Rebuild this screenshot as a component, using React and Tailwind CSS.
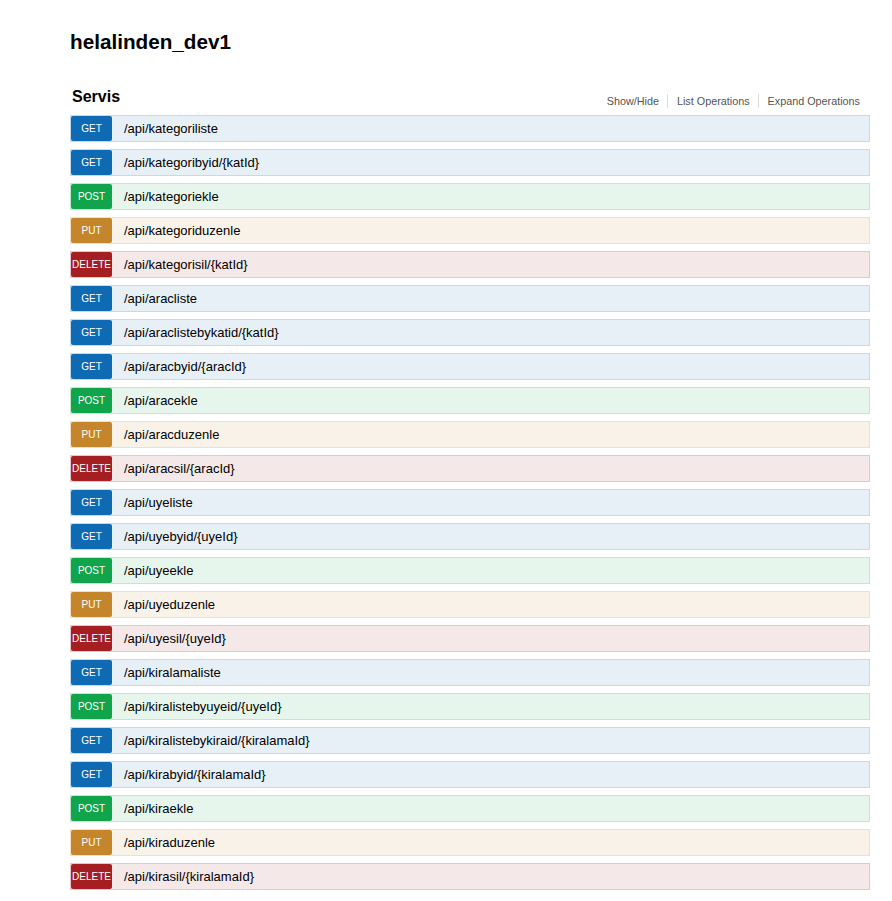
const S = {
  GET: { badge: "bg-[#0f6ab4]", row: "bg-[#e7f0f7] border-[#c3d9ec]" },
  POST: { badge: "bg-[#10a54a]", row: "bg-[#e7f6ec] border-[#c3e8d1]" },
  PUT: { badge: "bg-[#c5862b]", row: "bg-[#f9f2e9] border-[#f0e0ca]" },
  DELETE: { badge: "bg-[#a41e22]", row: "bg-[#f5e8e8] border-[#e8c6c7]" },
};

const ops = [
  ["GET", "/api/kategoriliste"],
  ["GET", "/api/kategoribyid/{katId}"],
  ["POST", "/api/kategoriekle"],
  ["PUT", "/api/kategoriduzenle"],
  ["DELETE", "/api/kategorisil/{katId}"],
  ["GET", "/api/aracliste"],
  ["GET", "/api/araclistebykatid/{katId}"],
  ["GET", "/api/aracbyid/{aracId}"],
  ["POST", "/api/aracekle"],
  ["PUT", "/api/aracduzenle"],
  ["DELETE", "/api/aracsil/{aracId}"],
  ["GET", "/api/uyeliste"],
  ["GET", "/api/uyebyid/{uyeId}"],
  ["POST", "/api/uyeekle"],
  ["PUT", "/api/uyeduzenle"],
  ["DELETE", "/api/uyesil/{uyeId}"],
  ["GET", "/api/kiralamaliste"],
  ["POST", "/api/kiralistebyuyeid/{uyeId}"],
  ["GET", "/api/kiralistebykiraid/{kiralamaId}"],
  ["GET", "/api/kirabyid/{kiralamaId}"],
  ["POST", "/api/kiraekle"],
  ["PUT", "/api/kiraduzenle"],
  ["DELETE", "/api/kirasil/{kiralamaId}"],
];

export default function App() {
  return (
    <div className="min-h-[901px] bg-white font-['Liberation_Sans',Arial,sans-serif] text-black">
      <div className="ml-[70px] w-[800px] pt-[29px]">
        <h1 className="text-[20.7px] font-bold leading-[26px] m-0">helalinden_dev1</h1>
        <div className="mt-[32px] flex items-end justify-between">
          <h2 className="ml-[2px] text-[16px] font-bold leading-[20px]">Servis</h2>
          <div className="flex items-center text-[10.8px] text-[#555] mb-[-2px] mr-[10px]">
            <span>Show/Hide</span>
            <span className="ml-[8px] mr-[9px] h-[14px] w-px bg-[#ddd]" />
            <span>List Operations</span>
            <span className="ml-[8px] mr-[9px] h-[14px] w-px bg-[#ddd]" />
            <span>Expand Operations</span>
          </div>
        </div>
        <div className="mt-[8px] flex flex-col gap-[7px]">
          {ops.map(([m, p], i) => (
            <div key={i} className={`flex h-[27px] items-center border ${S[m].row}`}>
              <span
                className={`flex h-[25px] w-[41px] items-center justify-center rounded-[2px] text-[10px] text-white ${S[m].badge}`}
              >
                {m}
              </span>
              <span className="ml-[12px] text-[13px] leading-[25px]">{p}</span>
            </div>
          ))}
        </div>
      </div>
    </div>
  );
}
